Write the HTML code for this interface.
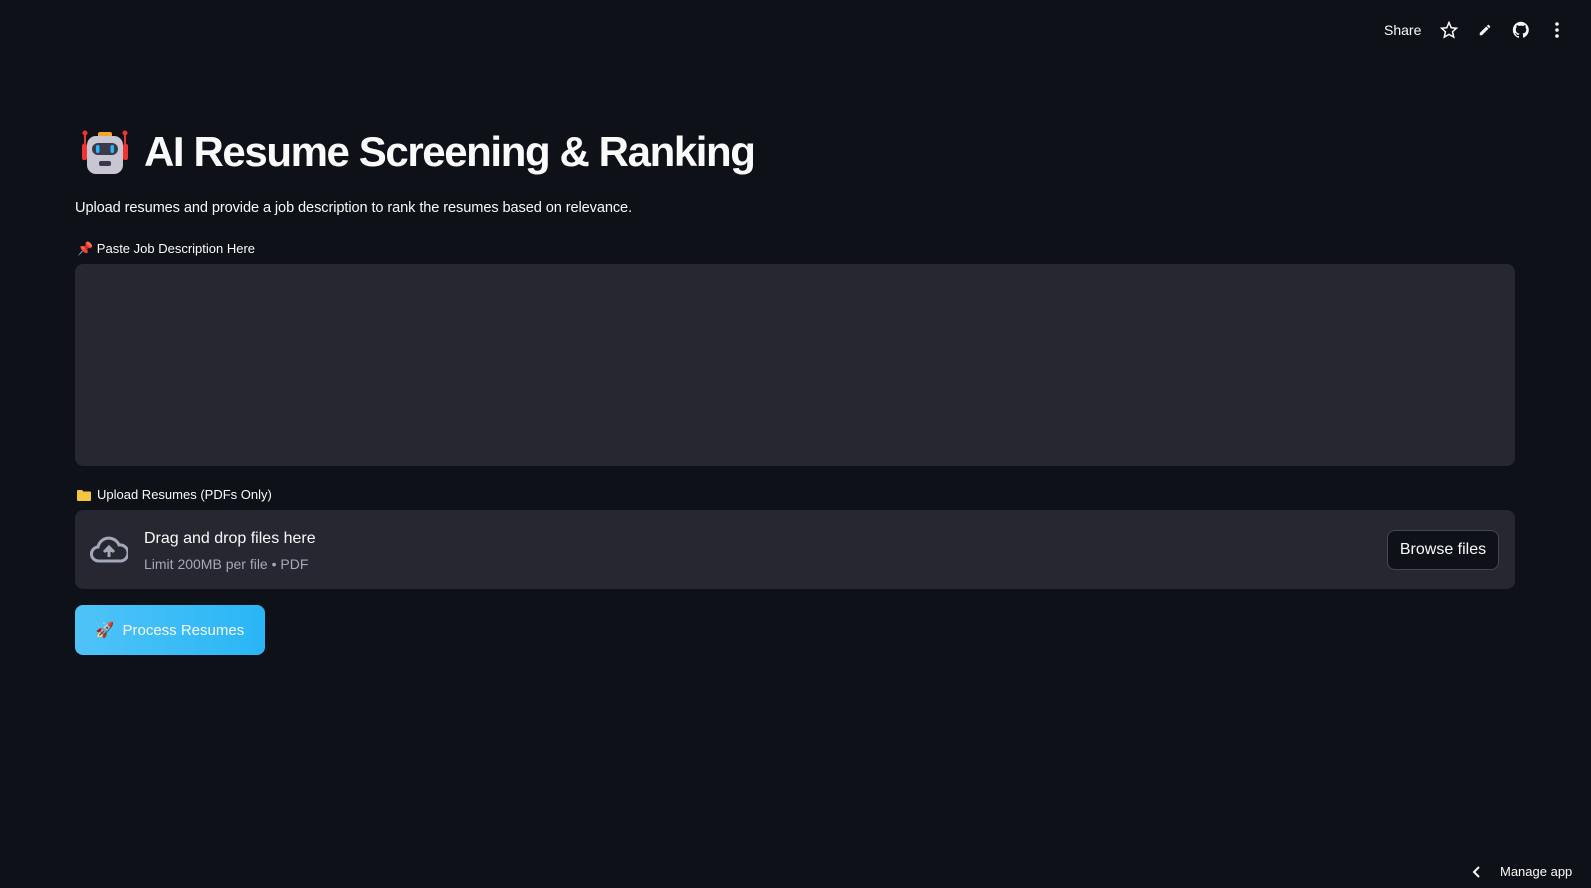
<!DOCTYPE html>
<html><head><style>
*{margin:0;padding:0;box-sizing:border-box}
body{width:1591px;height:888px;background:#0e1117;color:#fafafa;font-family:"Liberation Sans",sans-serif;position:relative;overflow:hidden}
.abs{position:absolute}
h1{position:absolute;left:144px;top:128px;font-size:42px;font-weight:bold;letter-spacing:-1.4px;white-space:nowrap}
.sub{left:75px;top:200px;font-size:14.6px;letter-spacing:-0.1px}
.lbl{font-size:13px}
.ta{left:75px;top:264px;width:1440px;height:202px;background:#262730;border-radius:8px}
.up{left:75px;top:510px;width:1440px;height:79px;background:#262730;border-radius:8px}
.btn{left:75px;top:605px;width:190px;height:50px;border-radius:8px;background:linear-gradient(90deg,#4fc3f7,#29b6f6);font-size:15px;display:flex;align-items:center;justify-content:center;gap:8px}
.browse{left:1387px;top:530px;width:112px;height:40px;border:1px solid #444650;border-radius:8px;background:#0e1117;font-size:16px;display:flex;align-items:center;justify-content:center}
</style></head><body>
<div class="abs" style="left:1384px;top:22px;font-size:14px">Share</div>
<svg class="abs" style="left:1440px;top:21px" width="18" height="18" viewBox="0 0 24 24" fill="none" stroke="#fafafa" stroke-width="2"><path d="M12 2l3 7 7 .6-5.3 4.7 1.6 7.2L12 17.8 5.7 21.5l1.6-7.2L2 9.6 9 9z"/></svg>
<svg class="abs" style="left:1478px;top:23px" width="14" height="14" viewBox="0 0 24 24" fill="#fafafa"><path d="M3 17.2V21h3.8L18 9.8 14.2 6zM20.7 7a1 1 0 000-1.4l-2.3-2.3a1 1 0 00-1.4 0l-1.8 1.8 3.8 3.8z"/></svg>
<svg class="abs" style="left:1512px;top:21px" width="18" height="18" viewBox="0 0 24 24" fill="#fafafa"><path d="M12 1a11 11 0 00-3.5 21.4c.6.1.8-.2.8-.5v-2c-3 .7-3.7-1.4-3.7-1.4-.5-1.300-1.2-1.6-1.2-1.6-1-.7.1-.7.1-.7 1.1.1 1.7 1.1 1.7 1.1 1 1.7 2.6 1.2 3.2.9.1-.7.4-1.2.7-1.5-2.4-.3-5-1.2-5-5.4 0-1.2.4-2.2 1.1-2.9-.1-.3-.5-1.4.1-2.9 0 0 .9-.3 3 1.100a10 10 0 015.5 0c2.1-1.4 3-1.1 3-1.1.6 1.5.2 2.6.1 2.9.7.8 1.1 1.7 1.1 2.9 0 4.2-2.6 5.1-5 5.4.4.3.7 1 .7 2v3c0 .3.2.6.8.5A11 11 0 0012 1z"/></svg>
<svg class="abs" style="left:1555px;top:22px" width="4" height="16"><circle cx="2" cy="2" r="1.8" fill="#fafafa"/><circle cx="2" cy="8" r="1.8" fill="#fafafa"/><circle cx="2" cy="14" r="1.8" fill="#fafafa"/></svg>
<svg class="abs" style="left:80px;top:130px" width="50" height="48" viewBox="0 0 50 48"><circle cx="5" cy="3" r="2.5" fill="#e33"/><circle cx="45" cy="3" r="2.5" fill="#e33"/><rect x="4" y="3" width="2" height="12" fill="#e33"/><rect x="44" y="3" width="2" height="12" fill="#e33"/><rect x="18" y="2" width="14" height="6" rx="2" fill="#f5a623"/><rect x="2" y="14" width="5" height="16" rx="2" fill="#e33"/><rect x="43" y="14" width="5" height="16" rx="2" fill="#e33"/><rect x="7" y="6" width="36" height="38" rx="9" fill="#c9c6d3"/><rect x="12" y="13" width="26" height="12" rx="6" fill="#3a3a4a"/><rect x="16" y="15" width="3.5" height="8" rx="1.7" fill="#29b6f6"/><rect x="30.5" y="15" width="3.5" height="8" rx="1.7" fill="#29b6f6"/><rect x="19" y="31" width="12" height="5" rx="2" fill="#3a3a4a"/></svg>
<h1>AI Resume Screening &amp; Ranking</h1>
<div class="abs sub">Upload resumes and provide a job description to rank the resumes based on relevance.</div>
<div class="abs lbl" style="left:77px;top:241px">📌 Paste Job Description Here</div>
<div class="abs ta"></div>
<svg class="abs" style="left:77px;top:489px" width="14" height="12" viewBox="0 0 14 12"><path d="M0 2a1 1 0 011-1h4l1.5 1.5H13a1 1 0 011 1V11a1 1 0 01-1 1H1a1 1 0 01-1-1z" fill="#f5c542"/></svg>
<div class="abs lbl" style="left:97px;top:487px">Upload Resumes (PDFs Only)</div>
<div class="abs up"></div>
<svg class="abs" style="left:90px;top:536px" width="38" height="28" viewBox="0 0 38 28" fill="none" stroke="#a3a8b8" stroke-width="3"><path d="M9 25a7 7 0 01-1-14 11 11 0 0121-2 8 8 0 012 16z"/><path d="M19 21v-9M14 16l5-5 5 5" fill="#a3a8b8"/></svg>
<div class="abs" style="left:144px;top:530px;font-size:16px">Drag and drop files here</div>
<div class="abs" style="left:144px;top:556px;font-size:14px;color:#a3a8b8">Limit 200MB per file • PDF</div>
<div class="abs browse">Browse files</div>
<div class="abs btn"><span>🚀</span><span>Process Resumes</span></div>
<svg class="abs" style="left:1472px;top:866px" width="10" height="12" viewBox="0 0 10 12" fill="none" stroke="#fafafa" stroke-width="2"><path d="M7 1L2 6l5 5"/></svg>
<div class="abs" style="left:1500px;top:864px;font-size:13px">Manage app</div>
</body></html>
